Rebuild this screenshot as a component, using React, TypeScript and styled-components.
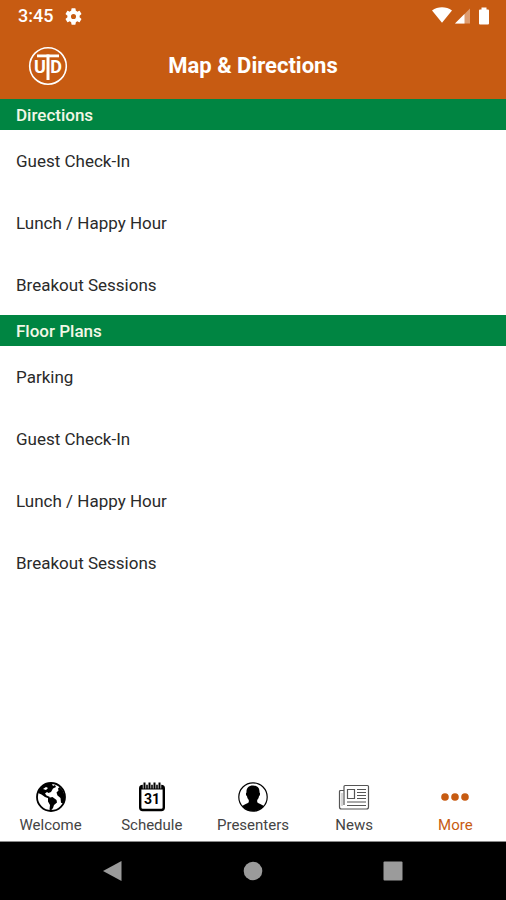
import React from "react";
import styled, { createGlobalStyle } from "styled-components";

const orange = "#c75b12";
const green = "#008542";

const GlobalStyle = createGlobalStyle`
  * { box-sizing: border-box; }
  body {
    margin: 0;
    background: #fff;
    font-family: Roboto, "Liberation Sans", sans-serif;
    color: #222;
  }
`;

const Screen = styled.div`
  display: flex;
  flex-direction: column;
  min-height: 100vh;
`;

const StatusBar = styled.div`
  display: flex;
  align-items: center;
  justify-content: space-between;
  height: 32px;
  padding: 0 16px 0 18px;
  background: ${orange};
  color: #fff;
`;

const StatusGroup = styled.div<{ $gap: number }>`
  display: flex;
  align-items: center;
  gap: ${(p) => p.$gap}px;
`;

const Clock = styled.time`
  font-size: 18px;
  font-weight: 500;
  line-height: 32px;
`;

const Header = styled.header`
  display: grid;
  grid-template-columns: 1fr auto 1fr;
  align-items: center;
  height: 67px;
  padding: 0 28px;
  background: ${orange};
  color: #fff;
`;

const LogoButton = styled.button`
  justify-self: start;
  display: flex;
  padding: 0;
  border: 0;
  background: none;
  cursor: pointer;
`;

const Title = styled.h1`
  margin: 0;
  font-size: 22px;
  font-weight: 700;
  line-height: 32px;
`;

const Content = styled.main`
  flex: 1;
`;

const SectionTitle = styled.h2`
  margin: 0;
  padding: 1px 16px 0;
  background: ${green};
  color: #f2f7e6;
  font-size: 17px;
  font-weight: 500;
  line-height: 30px;
`;

const List = styled.ul`
  display: flex;
  flex-direction: column;
  gap: 1px;
  margin: 0;
  padding: 0;
  list-style: none;
`;

const ItemLink = styled.a`
  display: block;
  padding: 1px 16px 0;
  color: #2a2a2a;
  font-size: 17px;
  line-height: 60px;
  text-decoration: none;
`;

const TabBar = styled.nav`
  display: grid;
  grid-template-columns: repeat(5, 1fr);
  height: 66px;
  border-bottom: 1px solid #8a8a8a;
`;

const Tab = styled.button<{ $active?: boolean }>`
  display: flex;
  flex-direction: column;
  align-items: center;
  gap: 2px;
  padding: 5px 0 0;
  border: 0;
  background: none;
  color: ${(p) => (p.$active ? orange : "#444")};
  font-family: inherit;
  font-size: 15px;
  line-height: 20px;
  cursor: pointer;
`;

const SystemNav = styled.nav`
  display: flex;
  align-items: center;
  justify-content: center;
  gap: 100px;
  height: 58px;
  background: #000;
`;

const SystemButton = styled.button`
  display: flex;
  padding: 0 10px;
  border: 0;
  background: none;
  cursor: pointer;
`;

const GearIcon = () => (
  <svg width="17" height="17" viewBox="2 2 20 20" fill="#fff" aria-hidden="true">
    <path d="M19.14 12.94c.04-.3.06-.61.06-.94s-.02-.64-.07-.94l2.03-1.58a.49.49 0 0 0 .12-.61l-1.92-3.32a.49.49 0 0 0-.59-.22l-2.39.96a7 7 0 0 0-1.62-.94l-.36-2.54a.48.48 0 0 0-.48-.41h-3.84a.48.48 0 0 0-.47.41l-.36 2.54c-.59.24-1.13.57-1.62.94l-2.39-.96a.48.48 0 0 0-.59.22L2.74 8.87a.48.48 0 0 0 .12.61l2.03 1.58c-.05.3-.09.63-.09.94s.02.64.07.94l-2.03 1.58a.49.49 0 0 0-.12.61l1.92 3.32c.12.22.37.29.59.22l2.39-.96c.5.38 1.03.7 1.62.94l.36 2.54c.05.24.24.41.48.41h3.84c.24 0 .44-.17.47-.41l.36-2.54a7 7 0 0 0 1.62-.94l2.39.96c.22.08.47 0 .59-.22l1.92-3.32a.48.48 0 0 0-.12-.61zM12 15a3 3 0 1 1 0-6 3 3 0 0 1 0 6z" />
  </svg>
);

const WifiIcon = () => (
  <svg width="20" height="18" viewBox="0 0 20 18" fill="#fff" aria-hidden="true">
    <path d="M0 3.500C3 1.300 6.300.3 10 .3s7 1 10 3.200L10 15.700z" />
  </svg>
);

const SignalIcon = () => (
  <svg width="15" height="16" viewBox="0 0 15 16" fill="#fff" aria-hidden="true">
    <path opacity=".4" d="M15 .5V15.500H0z" />
    <path d="M9.500 6V15.500H0z" />
  </svg>
);

const BatteryIcon = () => (
  <svg width="12" height="18" viewBox="0 0 12 18" fill="#fff" aria-hidden="true">
    <path d="M3.500.5h5v2H10a1 1 0 0 1 1 1V16.500a1 1 0 0 1-1 1H2a1 1 0 0 1-1-1V3.500a1 1 0 0 1 1-1h1.500z" />
  </svg>
);

const UtdLogo = () => (
  <svg width="40" height="40" viewBox="0 0 40 40" fill="#fff" aria-hidden="true">
    <circle cx="20" cy="20" r="18.300" fill="none" stroke="#fff" strokeWidth="1.600" />
    <g textAnchor="middle" fontFamily="Roboto, sans-serif" fontWeight="700" fontSize="18">
      <text x="12" y="27">U</text>
      <text x="28" y="27">D</text>
    </g>
    <rect x="9" y="8.500" width="22" height="2.800" />
    <rect x="18.500" y="8.500" width="3" height="25.500" />
  </svg>
);

const GlobeIcon = () => (
  <svg width="32" height="32" viewBox="0 0 32 32" aria-hidden="true">
    <circle cx="16" cy="16" r="14" fill="none" stroke="#000" strokeWidth="1.800" />
    <path d="M3 12C5 6 9 3 14 2l3 1 1 2 2-1 1 2-3 1.500-2 3.500-2.500 1-1.500-1-2 1.500 1.500 2 3.500 1.500-1 1.500-4-1.500L6.500 13.500z" />
    <path d="M13 17l4.500-1 4 3 .5 2.500-3 2.500-1 3-2 2.500-1.500-1L15 24l-2-3.500z" />
    <path d="M24.500 6l3 3 2 5 .3 4-1.500 4.500-2.300-.8L25.500 17l-3-2.500-1-3 2-2-.5-2z" />
    <path d="M8 8l3-2 2 1-2 2z" fill="#fff" />
  </svg>
);

const CalendarIcon = () => (
  <svg width="32" height="32" viewBox="0 0 32 32" aria-hidden="true">
    <rect x="4.200" y="5" width="23.600" height="24" rx="2.500" fill="#fff" stroke="#000" strokeWidth="2.400" />
    <path d="M4 5h24v3.500H4z" />
    <path d="M8.500 1.500v6M13.500 1.500v6M18.500 1.500v6M23.500 1.500v6" stroke="#fff" strokeWidth="3.400" />
    <path d="M8.500 1.500v6.500M13.500 1.500v6.500M18.500 1.500v6.500M23.500 1.500v6.500" stroke="#000" strokeWidth="2" />
    <text x="16" y="23" textAnchor="middle" fontFamily="Roboto, sans-serif" fontWeight="700" fontSize="14">31</text>
  </svg>
);

const PersonIcon = () => (
  <svg width="32" height="32" viewBox="0 0 32 32" aria-hidden="true">
    <circle cx="16" cy="16" r="14.200" fill="#fff" stroke="#000" strokeWidth="1.200" />
    <path d="M16 4.500c4.800 0 6.800 3 6.500 7 .9.300.7 3-.5 3.700-.3 1.800-1 3-1.800 3.800v2.200c1.500 1.600 4.500 2 6.700 3.800A14 14 0 0 1 16 30 14 14 0 0 1 5.100 25c2.200-1.800 5.200-2.200 6.700-3.800V19c-.8-.8-1.500-2-1.800-3.800-1.200-.7-1.400-3.400-.5-3.700-.3-4 1.700-7 6.500-7z" />
  </svg>
);

const NewsIcon = () => (
  <svg width="32" height="32" viewBox="0 0 32 32" fill="none" stroke="#555" strokeWidth="1.200" aria-hidden="true">
    <path d="M6 9.500H2.500a1 1 0 0 0-1 1V26a2 2 0 0 0 2 2h25a2 2 0 0 0 2-2V5.500a1 1 0 0 0-1-1H7a1 1 0 0 0-1 1V24" />
    <path d="M4 12v13" stroke="#bbb" />
    <path d="M9.500 8.500h7v9h-7zM19 8.500h9M19 11.500h9M19 14.500h9M19 17.500h9M9 21h19M9 24.500h19" />
  </svg>
);

const MoreIcon = () => (
  <svg width="32" height="32" viewBox="0 0 32 32" fill={orange} aria-hidden="true">
    <circle cx="6" cy="16" r="3.800" />
    <circle cx="16" cy="16" r="3.800" />
    <circle cx="26" cy="16" r="3.800" />
  </svg>
);

const sections = [
  { title: "Directions", items: ["Guest Check-In", "Lunch / Happy Hour", "Breakout Sessions"] },
  { title: "Floor Plans", items: ["Parking", "Guest Check-In", "Lunch / Happy Hour", "Breakout Sessions"] },
];

const tabs = [
  { label: "Welcome", Icon: GlobeIcon },
  { label: "Schedule", Icon: CalendarIcon },
  { label: "Presenters", Icon: PersonIcon },
  { label: "News", Icon: NewsIcon },
  { label: "More", Icon: MoreIcon, active: true },
];

export default function App() {
  return (
    <Screen>
      <GlobalStyle />
      <StatusBar>
        <StatusGroup $gap={12}>
          <Clock>3:45</Clock>
          <GearIcon />
        </StatusGroup>
        <StatusGroup $gap={8}>
          <StatusGroup $gap={3}>
            <WifiIcon />
            <SignalIcon />
          </StatusGroup>
          <BatteryIcon />
        </StatusGroup>
      </StatusBar>
      <Header>
        <LogoButton type="button" aria-label="UTD home">
          <UtdLogo />
        </LogoButton>
        <Title>Map &amp; Directions</Title>
      </Header>
      <Content>
        {sections.map((section) => (
          <section key={section.title}>
            <SectionTitle>{section.title}</SectionTitle>
            <List>
              {section.items.map((item) => (
                <li key={item}>
                  <ItemLink href="#">{item}</ItemLink>
                </li>
              ))}
            </List>
          </section>
        ))}
      </Content>
      <TabBar aria-label="Main">
        {tabs.map(({ label, Icon, active }) => (
          <Tab key={label} type="button" $active={active} aria-current={active ? "page" : undefined}>
            <Icon />
            {label}
          </Tab>
        ))}
      </TabBar>
      <SystemNav aria-label="System">
        <SystemButton type="button" aria-label="Back">
          <svg width="20" height="20" viewBox="0 0 20 20" fill="#9b9b9b">
            <path d="M0 10L18.500 0V20z" />
          </svg>
        </SystemButton>
        <SystemButton type="button" aria-label="Home">
          <svg width="20" height="20" viewBox="0 0 20 20" fill="#9b9b9b">
            <circle cx="10" cy="10" r="9.300" />
          </svg>
        </SystemButton>
        <SystemButton type="button" aria-label="Recent apps">
          <svg width="20" height="20" viewBox="0 0 20 20" fill="#9b9b9b">
            <rect x=".5" y=".5" width="19" height="19" rx="1" />
          </svg>
        </SystemButton>
      </SystemNav>
    </Screen>
  );
}
